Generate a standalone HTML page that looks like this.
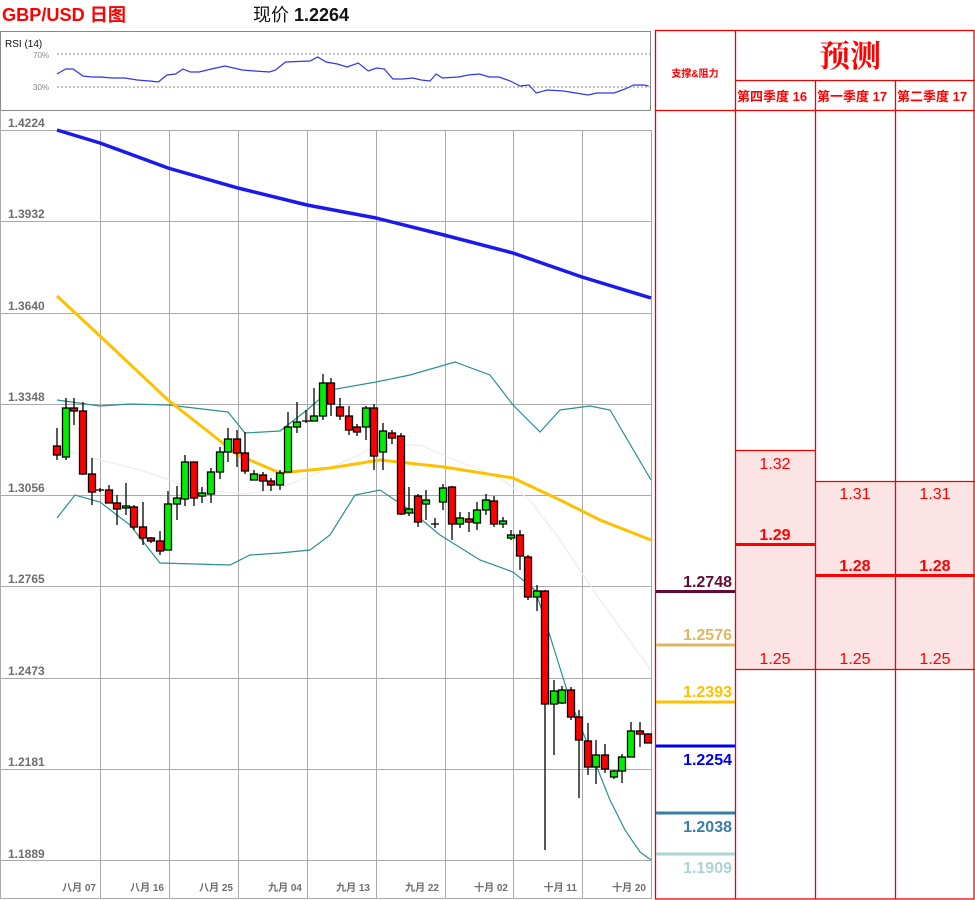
<!DOCTYPE html>
<html><head><meta charset="utf-8"><style>
body{margin:0;background:#fff;width:975px;height:900px;overflow:hidden}
svg{display:block}
.ax{font:bold 12px "Liberation Sans","Noto Sans CJK SC",sans-serif;fill:#6e6e6e}
.dt{font:bold 10px "Liberation Sans","Noto Sans CJK SC",sans-serif;fill:#6e6e6e}
.r{font-family:"Liberation Sans","Noto Sans CJK SC",sans-serif;fill:#f00}
</style></head><body>
<svg width="975" height="900" viewBox="0 0 975 900" xmlns="http://www.w3.org/2000/svg">
<text x="2" y="21" class="r" font-size="18" font-weight="bold" textLength="124" lengthAdjust="spacingAndGlyphs">GBP/USD 日图</text>
<text x="253" y="21" font-family="'Liberation Sans','Noto Sans CJK SC',sans-serif" font-size="18" fill="#111">现价 <tspan font-weight="bold">1.2264</tspan></text>
<!-- RSI -->
<rect x="0.5" y="31.5" width="650" height="79" fill="none" stroke="#888"/>
<text x="5" y="47" font-family="'Liberation Sans',sans-serif" font-size="10" fill="#111">RSI (14)</text>
<text x="33" y="58" font-family="'Liberation Sans',sans-serif" font-size="8" fill="#888">70%</text>
<text x="33" y="90" font-family="'Liberation Sans',sans-serif" font-size="8" fill="#888">30%</text>
<line x1="57" y1="54" x2="650" y2="54" stroke="#888" stroke-dasharray="2,2"/>
<line x1="57" y1="87" x2="650" y2="87" stroke="#888" stroke-dasharray="2,2"/>
<polyline id="rsi" fill="none" stroke="#3333ee" stroke-width="1.2" points=""/>
<!-- chart grid -->
<g stroke="#aaa" stroke-width="1">
<line x1="0" y1="130.5" x2="651" y2="130.5"/><line x1="0" y1="221.5" x2="651" y2="221.5"/><line x1="0" y1="313.5" x2="651" y2="313.5"/><line x1="0" y1="404.5" x2="651" y2="404.5"/><line x1="0" y1="495.5" x2="651" y2="495.5"/><line x1="0" y1="586.5" x2="651" y2="586.5"/><line x1="0" y1="678.5" x2="651" y2="678.5"/><line x1="0" y1="769.5" x2="651" y2="769.5"/><line x1="0" y1="860.5" x2="651" y2="860.5"/>
<line x1="100.5" y1="130" x2="100.5" y2="899"/><line x1="169.5" y1="130" x2="169.5" y2="899"/><line x1="238.5" y1="130" x2="238.5" y2="899"/><line x1="307.5" y1="130" x2="307.5" y2="899"/><line x1="376.5" y1="130" x2="376.5" y2="899"/><line x1="445.5" y1="130" x2="445.5" y2="899"/><line x1="513.5" y1="130" x2="513.5" y2="899"/><line x1="582.5" y1="130" x2="582.5" y2="899"/>
<line x1="0.5" y1="110" x2="0.5" y2="899"/><line x1="651.5" y1="130" x2="651.5" y2="899"/><line x1="0" y1="898.5" x2="651" y2="898.5"/>
</g>
<g class="ax"><text x="8" y="127">1.4224</text><text x="8" y="218">1.3932</text><text x="8" y="310">1.3640</text><text x="8" y="401">1.3348</text><text x="8" y="492">1.3056</text><text x="8" y="583">1.2765</text><text x="8" y="675">1.2473</text><text x="8" y="766">1.2181</text><text x="8" y="858">1.1889</text></g>
<g class="dt" text-anchor="end"><text x="96" y="891">八月 07</text><text x="164" y="891">八月 16</text><text x="233" y="891">八月 25</text><text x="302" y="891">九月 04</text><text x="370" y="891">九月 13</text><text x="439" y="891">九月 22</text><text x="508" y="891">十月 02</text><text x="577" y="891">十月 11</text><text x="646" y="891">十月 20</text></g>
<!-- bands & MAs -->
<polyline fill="none" stroke="#ececec" stroke-width="1.2" points="57,448 100,460 140,470 200,490 246,494 280,488 330,468 380,445 420,445 460,462 500,478 530,500 560,540 600,600 651,670"/>
<polyline fill="none" stroke="#2a9090" stroke-width="1.2" points="57,400 100,406 130,404 168,405 228,412 245,433 280,431 307,410 330,390 376,382 410,375 455,362 490,375 513,405 540,432 560,410 590,406 610,410 651,480"/>
<polyline fill="none" stroke="#2a9090" stroke-width="1.2" points="57,518 75,495 100,502 130,525 160,563 230,565 250,555 280,553 310,550 330,535 355,495 380,490 410,510 440,535 480,560 513,572 535,590 545,620 570,700 590,750 610,800 625,830 640,852 651,860"/>
<polyline fill="none" stroke="#ffc000" stroke-width="3" points="57,296 100,336 168,400 238,455 280,473 330,468 380,460 444,467 513,478 560,500 600,520 651,540"/>
<polyline fill="none" stroke="#1a1aee" stroke-width="3.5" points="57,130 100,143 168,168 238,188 307,205 376,218 444,235 513,253 582,277 651,298"/>
<!-- candles -->
<g id="c" stroke="#000" stroke-width="1.3"></g>
<!-- table -->
<rect x="736" y="450" width="79" height="219" fill="#fde4e4"/>
<rect x="816" y="481" width="158" height="188" fill="#fde4e4"/>
<g stroke="#e00" stroke-width="1.3" fill="none">
<rect x="655.5" y="30.5" width="318.5" height="868.5"/>
<line x1="735.5" y1="30" x2="735.5" y2="899"/><line x1="815.5" y1="80" x2="815.5" y2="899"/><line x1="895.5" y1="80" x2="895.5" y2="899"/>
<line x1="735" y1="80.5" x2="975" y2="80.5"/><line x1="655" y1="110.5" x2="975" y2="110.5"/>
<line x1="735" y1="450.5" x2="815" y2="450.5"/><line x1="815" y1="481.5" x2="975" y2="481.5"/><line x1="735" y1="669.5" x2="975" y2="669.5"/>
</g>
<line x1="735" y1="544.5" x2="815" y2="544.5" stroke="#f00" stroke-width="3"/>
<line x1="815" y1="575.5" x2="975" y2="575.5" stroke="#f00" stroke-width="3"/>
<text x="850" y="67" text-anchor="middle" font-family="'Noto Serif CJK SC','Liberation Serif',serif" font-size="31" font-weight="bold" fill="#f00">预测</text>
<text x="695" y="77" text-anchor="middle" class="r" font-size="10" font-weight="bold">支撑&amp;阻力</text>
<g class="r" font-size="13" font-weight="bold"><text x="737" y="101">第四季度 16</text><text x="817" y="101">第一季度 17</text><text x="897" y="101">第二季度 17</text></g>
<g class="r" font-size="16" text-anchor="middle"><text x="775" y="469">1.32</text><text x="855" y="499">1.31</text><text x="935" y="499">1.31</text>
<text x="775" y="664">1.25</text><text x="855" y="664">1.25</text><text x="935" y="664">1.25</text>
<text x="775" y="540" font-weight="bold">1.29</text><text x="855" y="571" font-weight="bold">1.28</text><text x="935" y="571" font-weight="bold">1.28</text></g>
<g font-family="'Liberation Sans',sans-serif" font-size="16" font-weight="bold" text-anchor="end">
<line x1="656" y1="591.5" x2="735" y2="591.5" stroke="#640a36" stroke-width="3"/><text x="732" y="587" fill="#640a36">1.2748</text>
<line x1="656" y1="645" x2="735" y2="645" stroke="#dcb764" stroke-width="3"/><text x="732" y="640" fill="#dcb764">1.2576</text>
<line x1="656" y1="702" x2="735" y2="702" stroke="#ffc000" stroke-width="3"/><text x="732" y="697" fill="#ffc000">1.2393</text>
<line x1="656" y1="746" x2="735" y2="746" stroke="#0000ee" stroke-width="3"/><text x="732" y="765" fill="#0000ee">1.2254</text>
<line x1="656" y1="813" x2="735" y2="813" stroke="#3a7ca5" stroke-width="3"/><text x="732" y="832" fill="#3a7ca5">1.2038</text>
<line x1="656" y1="854" x2="735" y2="854" stroke="#acd4d4" stroke-width="3"/><text x="732" y="873" fill="#acd4d4">1.1909</text>
</g>
</svg>
<script>
var rp=[[45,74],[52,69],[58,69],[66,76],[73,77],[80,77],[90,78],[100,78],[110,80],[120,81],[127,82],[134,75],[141,74],[147,69],[153,72],[160,72],[170,69],[181,66],[195,70],[205,71],[217,72],[222,70],[230,62],[250,61],[256,57],[263,62],[272,64],[280,67],[289,63],[297,71],[304,68],[310,69],[317,79],[325,79],[333,78],[340,80],[347,81],[352,74],[357,78],[370,77],[378,75],[387,74],[395,77],[403,77],[412,81],[420,86],[427,85],[433,93],[442,90],[455,91],[465,93],[475,95],[482,93],[496,93],[505,89],[512,85],[520,85],[524,86]];
document.getElementById('rsi').setAttribute('points',rp.map(function(p){return (57+(p[0]-45)*1.235).toFixed(1)+','+p[1]}).join(' '));
var d=[[57,'r',446,455,428,460],[66,'g',408,457,398,460],[74,'r',408,411,398,425],[83,'r',411,474,402,475],[92,'r',474,492,458,505],[100,'d',490,490,488,492],[109,'r',490,503,485,503],[117,'r',503,509,495,525],[126,'g',506,508,483,515],[134,'r',507,527,505,530],[143,'r',527,538,502,545],[151,'r',538,541,537,543],[160,'r',541,551,531,555],[168,'g',504,550,491,550],[177,'g',498,504,486,520],[185,'g',462,499,455,506],[194,'r',462,498,462,506],[202,'g',493,496,487,503],[211,'g',472,494,468,503],[220,'g',452,472,447,479],[228,'g',439,452,428,462],[237,'r',439,453,430,467],[245,'r',453,471,432,474],[254,'g',474,480,470,478],[263,'r',475,481,472,491],[271,'r',481,485,478,491],[280,'g',473,485,470,490],[288,'g',427,472,412,472],[297,'g',422,427,402,433],[306,'d',421,421,410,423],[314,'g',416,421,388,421],[323,'g',383,416,374,420],[331,'r',383,404,378,416],[340,'r',407,416,398,420],[349,'r',416,430,406,435],[357,'r',427,432,424,436],[366,'g',408,427,406,440],[374,'r',408,456,404,470],[383,'g',431,452,423,470],[392,'r',433,438,430,444],[401,'r',436,514,433,515],[409,'g',509,513,487,516],[418,'r',496,522,494,527],[426,'g',500,504,490,520],[435,'d',524,524,518,528],[443,'g',488,502,484,510],[452,'r',487,524,486,540],[460,'g',518,524,512,528],[469,'r',519,522,512,532],[477,'g',510,523,502,530],[486,'g',500,510,494,515],[494,'r',501,524,496,527],[503,'g',521,524,517,528],[511,'g',535,538,530,540],[520,'r',535,556,530,570],[528,'r',557,597,555,600],[537,'g',591,597,585,611],[545,'r',591,704,590,850],[554,'g',691,704,680,755],[562,'g',690,703,686,704],[571,'r',690,717,687,720],[579,'r',717,740,710,798],[588,'r',741,767,723,775],[596,'g',755,767,740,784],[605,'r',755,769,744,773],[614,'g',771,777,770,779],[622,'g',757,771,754,783],[631,'g',731,757,722,757],[640,'r',731,734,722,747],[648,'r',734,743,733,743]];
var g=document.getElementById('c'),s='';
d.forEach(function(c){s+='<line x1="'+c[0]+'" y1="'+c[4]+'" x2="'+c[0]+'" y2="'+c[5]+'"/>';
if(c[1]=='d'){s+='<line x1="'+(c[0]-4)+'" y1="'+c[2]+'" x2="'+(c[0]+4)+'" y2="'+c[2]+'"/>';}
else{s+='<rect x="'+(c[0]-3.5)+'" y="'+c[2]+'" width="7" height="'+Math.max(2,c[3]-c[2])+'" fill="'+(c[1]=='r'?'#f00':'#0e0')+'"/>';}});
g.innerHTML=s;
</script>
</body></html>
